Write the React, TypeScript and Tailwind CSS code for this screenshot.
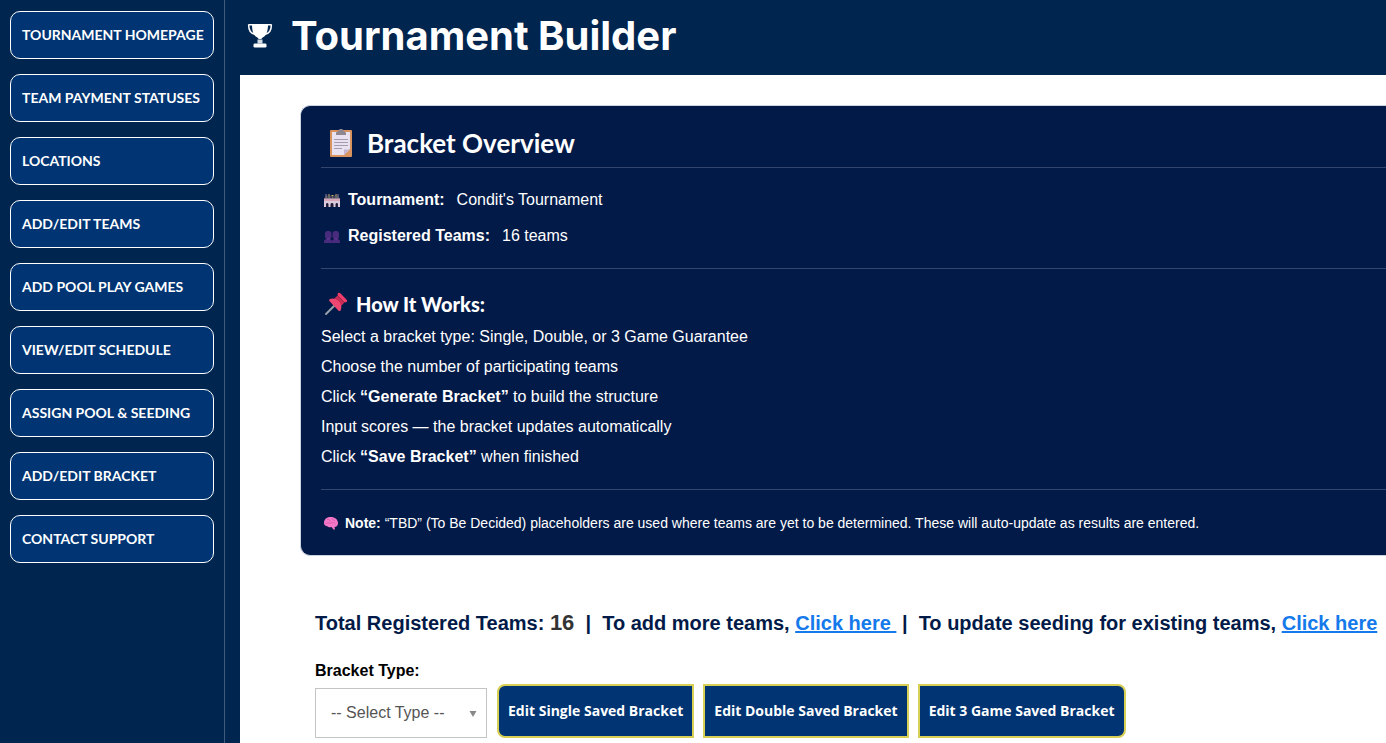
import { clsx } from 'clsx';

const navItems = [
  'TOURNAMENT HOMEPAGE',
  'TEAM PAYMENT STATUSES',
  'LOCATIONS',
  'ADD/EDIT TEAMS',
  'ADD POOL PLAY GAMES',
  'VIEW/EDIT SCHEDULE',
  'ASSIGN POOL & SEEDING',
  'ADD/EDIT BRACKET',
  'CONTACT SUPPORT'
];

const savedBrackets = [
  { label: 'Edit Single Saved Bracket', shape: 'rounded-l-lg' },
  { label: 'Edit Double Saved Bracket', shape: '' },
  { label: 'Edit 3 Game Saved Bracket', shape: 'rounded-r-lg' }
];

function TrophyIcon() {
  return (
    <svg viewBox="0 0 26 26" className="h-[26px] w-[26px]" aria-hidden="true">
      <path d="M1.5 1.700h4.300M20.200 1.700h4.300M1.600 1.500c0 5 1.500 8.800 6.200 9.800M24.400 1.500c0 5-1.500 8.800-6.200 9.800" fill="none" stroke="#fff" strokeWidth="1.500" />
      <path d="M5 1h16c0 7.500-1.500 11.500-5.300 13.600-.8.500-1.200.9-1.200 1.500h-3c0-.6-.4-1-1.200-1.500C6.500 12.500 5 8.500 5 1Z" fill="#fff" />
      <path d="M10.500 16.500h5v4h-5Z" fill="#d5dce5" />
      <rect x="6.500" y="20.500" width="13" height="4" rx="1.300" fill="#fff" />
    </svg>
  );
}

function ClipboardIcon() {
  return (
    <svg viewBox="0 0 28 30" className="h-[30px] w-7" aria-hidden="true">
      <rect x="3" y="2" width="22" height="27" rx="1" fill="#d8935f" />
      <path d="M5 4h18v17l-6 6H5Z" fill="#e8e1ef" />
      <path d="M17 27v-5.500h6Z" fill="#c3b5d0" />
      <path d="M9 7V5.500C9 4 10 3.500 11.500 3 11.500 1.500 12.500 1 14 1s2.500.5 2.500 2c1.500.5 2.500 1 2.500 2.500V7Z" fill="#8e8791" />
      <path d="M7 11.500h14M7 14.500h14M7 17.500h14M7 20.500h8" stroke="#a59caf" strokeWidth="1" />
    </svg>
  );
}

function StadiumIcon() {
  return (
    <svg viewBox="0 0 18 16" className="h-4 w-[18px]" aria-hidden="true">
      <path d="M1 7 3 3.500h12L17 7Z" fill="#463d52" />
      <path d="M3 2v4M15 2v4" stroke="#8d7c93" strokeWidth="1" />
      <path d="M5 3h2M8.500 3.500h2M12 3h2" stroke="#c9a968" strokeWidth="1" />
      <path d="M5 5h2M9 5h1M12 5h2" stroke="#6d9a75" strokeWidth="1" />
      <path d="M1 6.500h16V15H1Z" fill="#d9cbdc" />
      <path d="M1 8h16" stroke="#dd9aae" strokeWidth="1.500" />
      <path d="M3 15v-2.500c0-2 2.500-2 2.500 0V15ZM7.500 15v-2.500c0-2 3-2 3 0V15ZM12.500 15v-2.500c0-2 2.500-2 2.500 0V15Z" fill="#211c39" />
    </svg>
  );
}

function PeopleIcon() {
  return (
    <svg viewBox="0 0 18 16" className="h-4 w-[18px]" aria-hidden="true">
      <g fill="#492b7d">
        <rect x="2" y="3" width="6.500" height="8" rx="2.700" />
        <rect x="9.500" y="3" width="6.500" height="8" rx="2.700" />
        <path d="M1 15v-1.500C1 11.300 2.500 11 5 11s3.800.5 4 2.500c.2-2 1.500-2.500 4-2.500s4 .3 4 2.500V15Z" />
      </g>
      <path d="M4 10h3v1.500H4ZM11.500 10h3v1.500h-3Z" fill="#633591" />
    </svg>
  );
}

function PinIcon() {
  return (
    <svg viewBox="0 0 24 24" className="h-6 w-6" aria-hidden="true">
      <path d="m2 22 8-8" stroke="#9ba0ab" strokeWidth="2" strokeLinecap="round" />
      <path d="m13.500 3.500 7 7-4.500 4.500-7-7Z" fill="#c92c52" />
      <path d="M6 7c3-1.500 7 0 9.200 2.800 2 2.400 3 5.700 1.300 8.700-.5.800-1.500.8-2.200.1L5.600 9.200C5 8.500 5 7.500 6 7Z" fill="#f04672" />
      <path d="M14 1.300c.7-.7 1.700-.5 2.600.3l5.800 5.800c.8.800.9 1.800.2 2.500-.8.800-2 .5-3-.4l-5.200-5.200c-.9-1-1.200-2.200-.4-3Z" fill="#f23d69" />
    </svg>
  );
}

function BrainIcon() {
  return (
    <svg viewBox="0 0 16 16" className="h-4 w-4" aria-hidden="true">
      <path d="M1 8c0-3 2-5.500 5.500-6C11 1.300 15 4 15 8c0 2.500-1.500 4-3.500 4l.5 2.500h-1.500L8.500 12c-2 .5-3.500-.2-4.500-.8C2.200 11 1 9.800 1 8Z" fill="#f478c8" />
      <path d="M4 4.500c2-.5 3 .5 3 2M9 3c-.5 2 2 1.500 3 3M2.500 8.500C5 7 6 9 8 8s3-.5 4.500 1" fill="none" stroke="#d957aa" strokeWidth=".8" />
    </svg>
  );
}

function Sidebar() {
  return (
    <nav className="w-[225px] shrink-0 border-r border-[#405b7c] px-[10px] pt-[11px]">
      <ul className="flex flex-col gap-[15px]">
        {navItems.map((item) => (
          <li key={item}>
            <a
              href="#"
              className="flex h-12 items-center rounded-[10px] border border-white bg-[#003473] px-[11px] font-[Lato,sans-serif] text-sm font-bold whitespace-nowrap text-white"
            >
              {item}
            </a>
          </li>
        ))}
      </ul>
    </nav>
  );
}

function BracketOverview() {
  return (
    <section className="ml-[60px] rounded-l-[10px] border border-r-0 border-[#cbd3df] bg-[#021a48] pt-5 pb-[22px] pl-5 text-white">
      <h2 className="flex h-[42px] items-center gap-3 border-b border-[#34466c] pb-[7px] pl-[6px] font-[Lato,sans-serif] text-[26px] font-bold">
        <ClipboardIcon />
        Bracket Overview
      </h2>
      <div className="mt-[14px] border-b border-[#34466c] pb-[14px] pl-[2px]">
        <p className="flex h-9 items-center">
          <StadiumIcon />
          <strong className="mr-3 ml-[7px]">Tournament:</strong>
          Condit's Tournament
        </p>
        <p className="flex h-9 items-center">
          <PeopleIcon />
          <strong className="mr-3 ml-[7px]">Registered Teams:</strong>
          16 teams
        </p>
      </div>
      <div className="border-b border-[#34466c] py-[17px]">
        <h3 className="flex h-9 items-center gap-2 pl-[3px] font-[Lato,sans-serif] text-xl font-black">
          <PinIcon />
          How It Works:
        </h3>
        <ul className="leading-[30px]">
          <li>Select a bracket type: Single, Double, or 3 Game Guarantee</li>
          <li>Choose the number of participating teams</li>
          <li>Click <strong>“Generate Bracket”</strong> to build the structure</li>
          <li>Input scores — the bracket updates automatically</li>
          <li>Click <strong>“Save Bracket”</strong> when finished</li>
        </ul>
      </div>
      <p className="mt-[23px] flex h-5 items-center pl-[2px] text-sm">
        <BrainIcon />
        <span className="ml-[6px]">
          <strong>Note:</strong> “TBD” (To Be Decided) placeholders are used where teams are yet to be determined. These will auto-update as results are entered.
        </span>
      </p>
    </section>
  );
}

function BracketControls() {
  return (
    <div className="mt-5 flex items-end">
      <div>
        <label htmlFor="bracket-type" className="block h-[29px] leading-6 font-bold text-black">
          Bracket Type:
        </label>
        <div className="relative">
          <select
            id="bracket-type"
            className="h-[50px] w-[172px] appearance-none border border-[#c4c4c4] bg-white pr-8 pl-[15px] text-[#555]"
          >
            <option>-- Select Type --</option>
            <option>Single</option>
            <option>Double</option>
            <option>3 Game Guarantee</option>
          </select>
          <svg viewBox="0 0 8 6" className="pointer-events-none absolute top-[23px] right-[10px] h-[6px] w-2" aria-hidden="true">
            <path d="M.5 0h7L4 6Z" fill="#888" />
          </svg>
        </div>
      </div>
      <div className="ml-[10px] flex gap-[9px]">
        {savedBrackets.map(({ label, shape }) => (
          <button
            key={label}
            className={clsx(
              "h-[54px] border-2 border-[#d8d054] bg-[#003473] px-[9px] font-['Open_Sans',sans-serif] text-sm font-bold whitespace-nowrap text-white",
              shape
            )}
          >
            {label}
          </button>
        ))}
      </div>
    </div>
  );
}

export default function App() {
  return (
    <div className="flex min-h-screen bg-[#00254f] font-['Liberation_Sans',Arial,sans-serif] text-base">
      <Sidebar />
      <div className="ml-[15px] flex min-w-0 flex-1 flex-col">
        <header className="flex h-[75px] items-center gap-[18px] pb-1 pl-[7px] text-white">
          <TrophyIcon />
          <h1 className="font-[Inter,sans-serif] text-[40px] font-bold">Tournament Builder</h1>
        </header>
        <main className="flex-1 overflow-hidden bg-white pt-[30px] pb-[5px]">
          <BracketOverview />
          <div className="mt-[51px] pl-[75px]">
            <p className="text-xl leading-8 font-bold whitespace-nowrap text-[#021a48]">
              Total Registered Teams: <span className="text-[22px] text-[#333]">16</span> &nbsp;|&nbsp; To add more teams,{' '}
              <a href="#" className="text-[#1479ea] underline">Click here&nbsp;</a>
              &nbsp;|&nbsp; To update seeding for existing teams,{' '}
              <a href="#" className="text-[#1479ea] underline">Click here</a>
            </p>
            <BracketControls />
          </div>
        </main>
      </div>
    </div>
  );
}
